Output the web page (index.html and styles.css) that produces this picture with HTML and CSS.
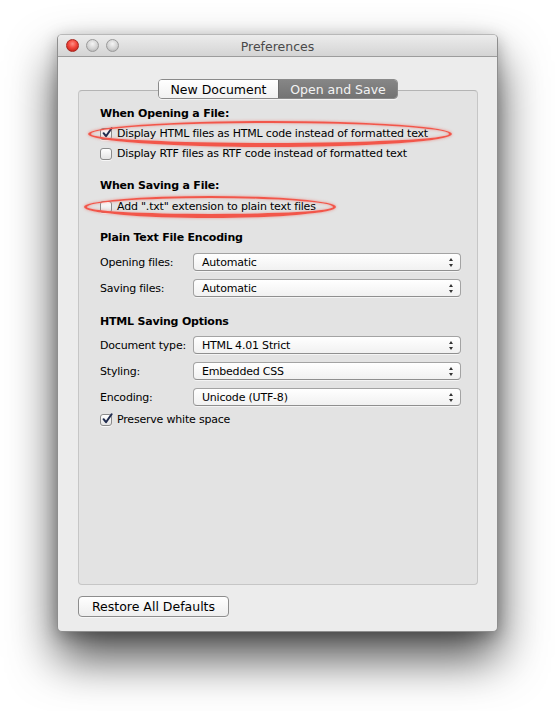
FILE: index.html
```html
<!DOCTYPE html>
<html>
<head>
<meta charset="utf-8">
<title>Preferences</title>
<link rel="stylesheet" href="styles.css">
</head>
<body>
<div class="window">
  <div class="titlebar">
    <div class="lights">
      <span class="light red"></span>
      <span class="light gray"></span>
      <span class="light gray"></span>
    </div>
    <div class="title">Preferences</div>
  </div>
  <div class="content">
    <div class="tabs">
      <div class="tab">New Document</div>
      <div class="tab selected">Open and Save</div>
    </div>
    <div class="box">
      <div class="heading">When Opening a File:</div>
      <label class="check first">
        <span class="cb checked"><svg viewBox="0 0 12 12" width="12" height="12"><path d="M2.6 6.2 L5 9.2 L10.6 1.2" fill="none" stroke="#1f2b4e" stroke-width="2" stroke-linecap="round" stroke-linejoin="round"/></svg></span>
        <span>Display HTML files as HTML code instead of formatted text</span>
      </label>
      <label class="check">
        <span class="cb"></span>
        <span>Display RTF files as RTF code instead of formatted text</span>
      </label>
      <div class="heading h2">When Saving a File:</div>
      <label class="check first">
        <span class="cb"></span>
        <span>Add ".txt" extension to plain text files</span>
      </label>
      <div class="heading h3">Plain Text File Encoding</div>
      <div class="row r1">
        <span class="lbl">Opening files:</span>
        <div class="popup"><span>Automatic</span><span class="arrows"></span></div>
      </div>
      <div class="row">
        <span class="lbl">Saving files:</span>
        <div class="popup"><span>Automatic</span><span class="arrows"></span></div>
      </div>
      <div class="heading h4">HTML Saving Options</div>
      <div class="row r3">
        <span class="lbl">Document type:</span>
        <div class="popup"><span>HTML 4.01 Strict</span><span class="arrows"></span></div>
      </div>
      <div class="row">
        <span class="lbl">Styling:</span>
        <div class="popup"><span>Embedded CSS</span><span class="arrows"></span></div>
      </div>
      <div class="row">
        <span class="lbl">Encoding:</span>
        <div class="popup"><span>Unicode (UTF-8)</span><span class="arrows"></span></div>
      </div>
      <label class="check last">
        <span class="cb checked"><svg viewBox="0 0 12 12" width="12" height="12"><path d="M2.6 6.2 L5 9.2 L10.6 1.2" fill="none" stroke="#1f2b4e" stroke-width="2" stroke-linecap="round" stroke-linejoin="round"/></svg></span>
        <span>Preserve white space</span>
      </label>
    </div>
    <div class="footer">
      <button class="btn">Restore All Defaults</button>
    </div>
  </div>
  <div class="mark mark1"></div>
  <div class="mark mark2"></div>
</div>
</body>
</html>
```
FILE: styles.css
```css
* { box-sizing: border-box; }
html, body { margin: 0; padding: 0; background: #ffffff; }
body {
  width: 555px;
  height: 711px;
  overflow: hidden;
  padding: 34px 0 0 57px;
  font-family: "DejaVu Sans", "Liberation Sans", sans-serif;
  font-size: 11px;
  letter-spacing: -0.2px;
  color: #000;
}
.window {
  position: relative;
  width: 441px;
  height: 598px;
  background: #ececec;
  border: 1px solid #8e8e8e;
  border-top-color: #b8b8b8;
  border-radius: 5px;
  box-shadow: 0 26px 48px rgba(0,0,0,0.7), 0 4px 16px rgba(0,0,0,0.25);
  display: flex;
  flex-direction: column;
}
.titlebar {
  height: 22px;
  flex: none;
  background: linear-gradient(#ececec, #d4d4d4);
  border-bottom: 1px solid #9c9c9c;
  border-radius: 4px 4px 0 0;
  display: flex;
  align-items: center;
  position: relative;
}
.lights {
  display: flex;
  gap: 7px;
  padding-left: 8px;
}
.light {
  width: 13px;
  height: 13px;
  border-radius: 50%;
  display: block;
}
.light.red {
  background: radial-gradient(circle at 50% 35%, #ff8f85 0%, #f2463b 45%, #b3160e 100%);
  border: 1px solid #a8261f;
}
.light.gray {
  background: radial-gradient(circle at 50% 35%, #f4f4f4 0%, #d2d2d2 55%, #a9a9a9 100%);
  border: 1px solid #9a9a9a;
}
.title {
  position: absolute;
  left: 0; right: 0; top: 0; bottom: 0;
  display: flex;
  align-items: center;
  justify-content: center;
  font-size: 12.5px;
  letter-spacing: 0;
  color: #4a4a4a;
  padding-top: 1px;
}
.content {
  flex: 1;
  display: flex;
  flex-direction: column;
  padding: 22px 19px 14px 20px;
}
.tabs {
  align-self: center;
  display: flex;
  height: 20px;
  border: 1px solid #8a8a8a;
  border-radius: 4px;
  overflow: hidden;
  position: relative;
  z-index: 2;
  box-shadow: 0 1px 0 rgba(255,255,255,0.6);
}
.tab {
  width: 119px;
  display: flex;
  align-items: center;
  justify-content: center;
  font-size: 12.5px;
  letter-spacing: 0;
  background: linear-gradient(#ffffff, #f1f1f1);
  color: #000;
}
.tab.selected {
  background: linear-gradient(#868686, #737373);
  color: #f3f3f3;
  border-left: 1px solid #6a6a6a;
}
.box {
  flex: 1;
  margin-top: -9px;
  background: #e3e3e3;
  border: 1px solid #c6c6c6;
  border-top-color: #b4b4b4;
  border-radius: 4px;
  padding: 15px 16px 0 21px;
  display: flex;
  flex-direction: column;
}
.heading {
  font-weight: bold;
  line-height: 16px;
  height: 16px;
}
.h2 { margin-top: 14px; }
.h3 { margin-top: 13px; }
.h4 { margin-top: 17px; }
.check {
  display: flex;
  align-items: center;
  gap: 5px;
  height: 20px;
  line-height: 20px;
  white-space: nowrap;
}
.check.first { margin-top: 2px; }
.h2 + .check.first { margin-top: 3px; }
.check.last { margin-top: 4px; }
.cb {
  width: 12px;
  height: 12px;
  flex: none;
  border: 1px solid #8b8b8b;
  border-radius: 3px;
  background: linear-gradient(#ffffff, #e4e4e4);
  box-shadow: 0 1px 0 rgba(255,255,255,0.7);
  position: relative;
  display: block;
}
.cb svg {
  position: absolute;
  left: 0px;
  top: -2px;
}
.row {
  display: grid;
  grid-template-columns: 93px 268px;
  align-items: center;
  height: 18px;
  margin-top: 8px;
}
.row.r1 { margin-top: 7px; }
.row.r3 { margin-top: 6px; }
.popup {
  height: 18px;
  border: 1px solid #a3a3a3;
  border-bottom-color: #8f8f8f;
  border-radius: 4px;
  background: linear-gradient(#ffffff, #f1f1f1);
  display: flex;
  align-items: center;
  justify-content: space-between;
  padding: 0 6px 0 8px;
  box-shadow: 0 1px 0 rgba(255,255,255,0.6);
}
.arrows {
  width: 5px;
  height: 9px;
  position: relative;
  display: block;
}
.arrows::before, .arrows::after {
  content: "";
  position: absolute;
  left: 0;
  border-left: 2.5px solid transparent;
  border-right: 2.5px solid transparent;
}
.arrows::before { top: 0; border-bottom: 3px solid #333; }
.arrows::after { bottom: 0; border-top: 3px solid #333; }
.footer {
  flex: none;
  padding-top: 11px;
  display: flex;
}
.btn {
  height: 21px;
  width: 151px;
  border: 1px solid #8d8d8d;
  border-radius: 4px;
  background: linear-gradient(#ffffff, #eeeeee);
  font-family: "DejaVu Sans", "Liberation Sans", sans-serif;
  font-size: 12.5px;
  color: #000;
  padding: 0;
  box-shadow: 0 1px 0 rgba(255,255,255,0.6);
}
.mark {
  position: absolute;
  border: 3px solid #f2564a;
  border-top-width: 2px;
  border-bottom-width: 4px;
  border-radius: 50%;
  box-shadow: 0 0 3px rgba(240,88,77,0.6), inset 0 0 3px rgba(240,88,77,0.5);
  pointer-events: none;
}
.mark1 { left: 30px; top: 86px; width: 364px; height: 26px; }
.mark2 { left: 26px; top: 161px; width: 252px; height: 22px; }
```
